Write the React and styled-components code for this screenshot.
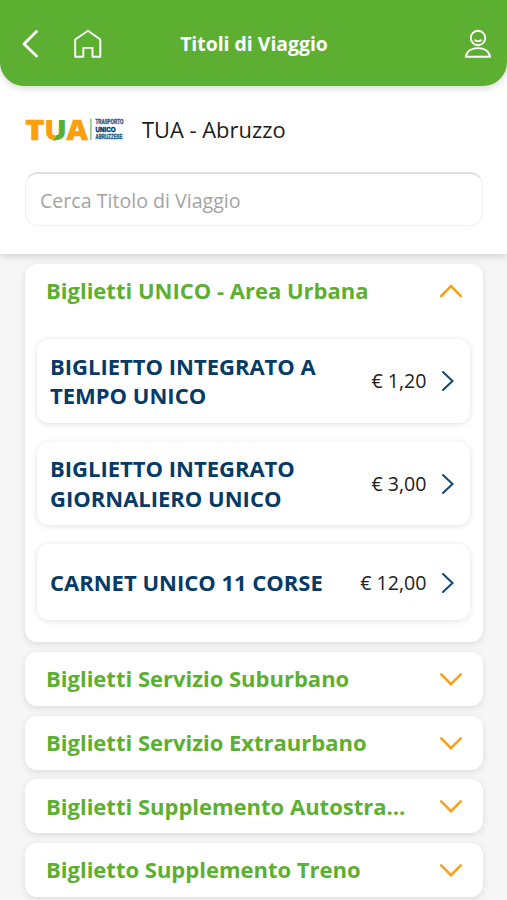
import React from "react";
import styled, { createGlobalStyle } from "styled-components";

const GlobalStyle = createGlobalStyle`
  *, *::before, *::after { box-sizing: border-box; }
  html, body { margin: 0; background: #f6f6f6; }
  body { font-family: "Open Sans", "Noto Sans", sans-serif; overflow: hidden; }
  button { font: inherit; border: 0; padding: 0; background: none; text-align: left; }
`;

const Screen = styled.div`
  width: 507px;
  height: 900px;
  overflow: hidden;
  background: #f6f6f6;
`;

const TopPanel = styled.div`
  position: relative;
  height: 254px;
  background: #fff;
  box-shadow: 0 2px 8px rgba(0, 0, 0, 0.16);
`;

const Header = styled.header`
  display: grid;
  grid-template-columns: 40px 54px 1fr 99px;
  align-items: center;
  height: 86px;
  padding: 2px 15px 0 21px;
  background: #5daf31;
  border-radius: 0 0 24px 24px;
  box-shadow: 0 2px 7px rgba(0, 0, 0, 0.16);
`;

const HeaderButton = styled.button`
  display: flex;
  justify-content: ${(p) => p.$align || "flex-start"};
`;

const Title = styled.h1`
  margin: 0 0 1px;
  text-align: center;
  font-size: 19.4px;
  line-height: 26px;
  font-weight: 700;
  white-space: nowrap;
  color: #fff;
`;

const Operator = styled.div`
  display: flex;
  align-items: center;
  height: 86px;
  padding: 2px 0 0 25px;
  gap: 13px;
`;

const OperatorName = styled.span`
  font-size: 21.9px;
  line-height: 30px;
  color: #1d1d1d;
`;

const Search = styled.input`
  display: block;
  width: 458px;
  height: 54px;
  margin: 0 0 0 25px;
  padding: 1px 14px 0;
  border: 1px solid #f1f1f1;
  border-top: 2px solid #e0e0e0;
  border-radius: 13px;
  outline: 0;
  background: #fff;
  font: 400 19.6px "Open Sans", sans-serif;
  &::placeholder { color: #a3a3a3; opacity: 1; }
`;

const List = styled.main`
  display: flex;
  flex-direction: column;
  gap: 9.6px;
  padding: 10px 24.5px 0 25px;
`;

const Card = styled.section`
  flex: none;
  height: ${(p) => (p.$open ? "378.4px" : "54px")};
  border-radius: 12px;
  background: #fff;
  box-shadow: 0 2px 7px rgba(0, 0, 0, 0.11);
`;

const CardHeader = styled.button`
  display: flex;
  align-items: center;
  justify-content: space-between;
  width: 100%;
  height: 54px;
  padding: 0 20px 0 21px;
  color: #5daf31;
`;

const CardTitle = styled.span`
  margin-bottom: ${(p) => (p.$open ? 2 : 1)}px;
  font-size: 22px;
  line-height: 30px;
  font-weight: 700;
  white-space: nowrap;
`;

const Tickets = styled.div`
  display: flex;
  flex-direction: column;
  gap: 19px;
  padding: 21px 12.5px 0 12px;
`;

const Ticket = styled.button`
  display: flex;
  align-items: center;
  width: 100%;
  height: ${(p) => (p.$short ? 76 : 83.5)}px;
  padding: 1px 15px 0 13px;
  border-radius: 12px;
  background: #fff;
  box-shadow: 0 1px 6px rgba(0, 0, 0, 0.12);
`;

const TicketName = styled.span`
  flex: 1;
  white-space: pre-line;
  font-size: 22px;
  line-height: 29.5px;
  font-weight: 700;
  color: #053b66;
`;

const Price = styled.span`
  margin-right: 14.5px;
  font-size: 19.6px;
  line-height: 28px;
  white-space: nowrap;
  color: #222;
`;

const BackIcon = () => (
  <svg width="19" height="30" viewBox="0 0 19 30" fill="none" stroke="#fff" strokeWidth="2.8" strokeLinecap="round" strokeLinejoin="round">
    <path d="M15.5 2.5 3 15l12.5 12" />
  </svg>
);

const HomeIcon = () => (
  <svg width="30" height="30" viewBox="0 0 30 30" fill="none" stroke="#fff" strokeWidth="1.9" strokeLinejoin="round">
    <path d="M2.2 10.5 15 1.8l12.3 8.7v17.3h-7.8v-8.9h-9.2v8.9H2.2z" />
  </svg>
);

const ProfileIcon = () => (
  <svg width="28" height="30" viewBox="0 0 28 30" fill="none" stroke="#fff" strokeWidth="1.9" strokeLinecap="round" strokeLinejoin="round">
    <circle cx="14" cy="9" r="7.2" />
    <path d="M11 11.2q3 2 6 0M1.7 27.8c1-5.5 6-8.7 12.2-8.7s11.2 3.2 12.2 8.7z" />
  </svg>
);

const Chevron = ({ up }) => (
  <svg width="24" height="14" viewBox="0 0 24 14" fill="none" stroke="#f6a11a" strokeWidth="2.6" strokeLinecap="round" strokeLinejoin="miter">
    <path d={up ? "M2.2 12 12 2.2l9.8 9.8" : "M2.2 2.3 12 12.1l9.8-9.8"} />
  </svg>
);

const Next = () => (
  <svg width="14" height="22" viewBox="0 0 14 22" fill="none" stroke="#164a75" strokeWidth="2.1" strokeLinecap="round">
    <path d="m2 2 9.5 9L2 20" />
  </svg>
);

const Logo = () => (
  <svg width="104" height="44" viewBox="0 -8.5 104 44" role="img" aria-label="TUA Trasporto Unico Abruzzese">
    <defs>
      <linearGradient id="split">
        <stop offset="0.52" stopColor="#faa00f" />
        <stop offset="0.52" stopColor="#5daf31" />
      </linearGradient>
    </defs>
    <g fontFamily="Open Sans" fontWeight="800" fontSize="28.8" fill="#faa00f" stroke="#faa00f" strokeWidth="0.6">
      <text x="0.3" y="23" textLength="19.2" lengthAdjust="spacingAndGlyphs">T</text>
      <text x="19" y="23" textLength="23" lengthAdjust="spacingAndGlyphs" fill="url(#split)" stroke="none">U</text>
      <text x="41.5" y="23" textLength="21.5" lengthAdjust="spacingAndGlyphs">A</text>
    </g>
    <path d="M34 20q-1 4-6 4.5l3-4.5z" fill="#5daf31" />
    <path d="M65.9 2v21.5" stroke="#83bf66" strokeWidth="1.4" />
    <g fontFamily="Liberation Sans" fontWeight="700" fontSize="7.6" fill="#31638a" stroke="#31638a" strokeWidth="0.5">
      <text transform="translate(70.5 7.6) scale(0.587 1)">TRASPORTO</text>
      <text transform="translate(70.5 15.2) scale(0.816 1)" fill="#003d70" stroke="#003d70">UNICO</text>
      <text transform="translate(70.5 22.9) scale(0.582 1)">ABRUZZESE</text>
    </g>
  </svg>
);

const tickets = [
  { name: "BIGLIETTO INTEGRATO A\nTEMPO UNICO", price: "€ 1,20" },
  { name: "BIGLIETTO INTEGRATO\nGIORNALIERO UNICO", price: "€ 3,00" },
  { name: "CARNET UNICO 11 CORSE", price: "€ 12,00", short: true },
];

const groups = [
  "Biglietti Servizio Suburbano",
  "Biglietti Servizio Extraurbano",
  "Biglietti Supplemento Autostra...",
  "Biglietto Supplemento Treno",
];

export default function App() {
  return (
    <Screen>
      <GlobalStyle />
      <TopPanel>
        <Header>
          <HeaderButton aria-label="Indietro"><BackIcon /></HeaderButton>
          <HeaderButton aria-label="Home" $align="center"><HomeIcon /></HeaderButton>
          <Title>Titoli di Viaggio</Title>
          <HeaderButton aria-label="Profilo" $align="flex-end"><ProfileIcon /></HeaderButton>
        </Header>
        <Operator>
          <Logo />
          <OperatorName>TUA - Abruzzo</OperatorName>
        </Operator>
        <Search placeholder="Cerca Titolo di Viaggio" />
      </TopPanel>
      <List>
        <Card $open>
          <CardHeader><CardTitle $open>Biglietti UNICO - Area Urbana</CardTitle><Chevron up /></CardHeader>
          <Tickets>
            {tickets.map((t) => (
              <Ticket key={t.name} $short={t.short}>
                <TicketName>{t.name}</TicketName>
                <Price>{t.price}</Price>
                <Next />
              </Ticket>
            ))}
          </Tickets>
        </Card>
        {groups.map((g) => (
          <Card key={g}>
            <CardHeader><CardTitle>{g}</CardTitle><Chevron /></CardHeader>
          </Card>
        ))}
      </List>
    </Screen>
  );
}
